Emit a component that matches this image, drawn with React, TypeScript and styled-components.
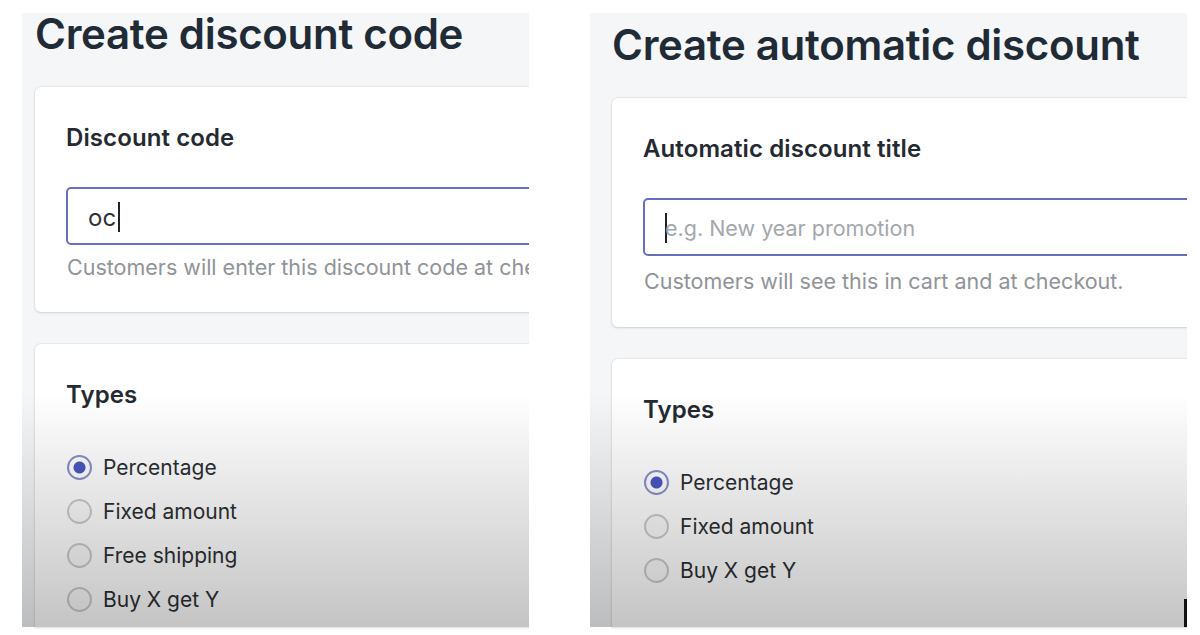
import React from "react";
import styled, { createGlobalStyle } from "styled-components";

const GlobalStyle = createGlobalStyle`
  body {
    margin: 0;
    background: #fff;
    font-family: Inter, "Noto Sans", sans-serif;
    -webkit-font-smoothing: antialiased;
  }
`;

const Page = styled.main`
  display: flex;
  gap: 61px;
  padding: 13px 0 0 22px;
  height: 635px;
  box-sizing: border-box;
`;

const Panel = styled.section<{ $width: number; $inset: number; $top: number }>`
  position: relative;
  flex: none;
  display: flex;
  flex-direction: column;
  width: ${(p) => p.$width}px;
  height: 614px;
  overflow-x: clip;
  background: #f4f6f8;
  padding: ${(p) => p.$top}px 0 0 ${(p) => p.$inset}px;
  box-sizing: border-box;
  &::after {
    content: "";
    position: absolute;
    inset: 0;
    background: linear-gradient(
      to bottom,
      rgba(0, 0, 0, 0) 62%,
      rgba(0, 0, 0, 0.23) 100%
    );
    pointer-events: none;
  }
`;

const Title = styled.h1`
  flex: none;
  margin: 0 0 32px 0;
  font-size: 42px;
  line-height: 42px;
  font-weight: 600;
  letter-spacing: -0.3px;
  color: #212b36;
  white-space: nowrap;
`;

const Card = styled.div<{ $bottom: number; $fill?: boolean }>`
  flex: ${(p) => (p.$fill ? "1 1 0" : "none")};
  min-height: 0;
  overflow: hidden;
  width: 760px;
  background: #fff;
  border-radius: ${(p) => (p.$fill ? "6px 6px 0 0" : "6px")};
  box-shadow: 0 0 0 1px rgba(63, 63, 68, 0.05), 0 1px 3px rgba(63, 63, 68, 0.15);
  padding: 37px 0 ${(p) => p.$bottom}px 31px;
  margin-bottom: ${(p) => (p.$fill ? 0 : 32)}px;
  box-sizing: border-box;
`;

const Heading = styled.h2`
  margin: 0;
  font-size: 24px;
  line-height: 28px;
  font-weight: 600;
  letter-spacing: 0.1px;
  color: #242a31;
  white-space: nowrap;
`;

const Field = styled.div<{ $empty?: boolean }>`
  margin-top: 35px;
  height: 58px;
  box-sizing: border-box;
  border: 2px solid #6670c3;
  border-radius: 5px;
  display: flex;
  align-items: center;
  padding: 2px 0 0 20px;
  font-size: 21.5px;
  color: ${(p) => (p.$empty ? "#a3a8ad" : "#303236")};
`;

const Value = styled.span`
  font-size: 24px;
`;

const Caret = styled.span<{ $lead?: boolean }>`
  display: inline-block;
  width: 2px;
  height: 30px;
  background: #222;
  margin: ${(p) => (p.$lead ? "0 -2px 0 0" : "0 0 0 2px")};
`;

const Help = styled.p<{ $gap: number }>`
  margin: ${(p) => p.$gap}px 0 0 1px;
  font-size: 21.5px;
  line-height: 24px;
  color: #8f9498;
  white-space: nowrap;
`;

const Options = styled.ul`
  list-style: none;
  margin: 36px 0 0 0;
  padding: 0;
`;

const Option = styled.li`
  display: flex;
  align-items: center;
  gap: 11px;
  height: 44px;
  font-size: 21px;
  color: #2b2f33;
`;

const Radio = styled.span<{ $on?: boolean }>`
  flex: none;
  width: 25px;
  height: 25px;
  margin-left: 1px;
  border-radius: 50%;
  box-sizing: border-box;
  border: 2px solid ${(p) => (p.$on ? "#8a90c8" : "#c9ccd0")};
  background: ${(p) =>
    p.$on ? "radial-gradient(circle, #4b57c2 0 5.5px, #fff 6.5px)" : "#fbfbfb"};
`;

const Pointer = styled.span`
  position: absolute;
  right: 0;
  bottom: 0;
  width: 3px;
  height: 28px;
  background: #111;
  z-index: 1;
`;

const TypeList = ({ items }: { items: string[] }) => (
  <Options>
    {items.map((t, i) => (
      <Option key={t}>
        <Radio $on={i === 0} />
        {t}
      </Option>
    ))}
  </Options>
);

export default function App() {
  return (
    <>
      <GlobalStyle />
      <Page>
        <Panel $width={507} $inset={13} $top={0}>
          <Title>Create discount code</Title>
          <Card $bottom={33}>
            <Heading>Discount code</Heading>
            <Field>
              <Value>oc</Value>
              <Caret />
            </Field>
            <Help $gap={10}>Customers will enter this discount code at checkout.</Help>
          </Card>
          <Card $bottom={0} $fill>
            <Heading>Types</Heading>
            <TypeList items={["Percentage", "Fixed amount", "Free shipping", "Buy X get Y"]} />
          </Card>
        </Panel>
        <Panel $width={597} $inset={22} $top={11}>
          <Title>Create automatic discount</Title>
          <Card $bottom={34}>
            <Heading>Automatic discount title</Heading>
            <Field $empty>
              <Caret $lead />
              e.g. New year promotion
            </Field>
            <Help $gap={13}>Customers will see this in cart and at checkout.</Help>
          </Card>
          <Card $bottom={0} $fill>
            <Heading>Types</Heading>
            <TypeList items={["Percentage", "Fixed amount", "Buy X get Y"]} />
          </Card>
          <Pointer />
        </Panel>
      </Page>
    </>
  );
}
